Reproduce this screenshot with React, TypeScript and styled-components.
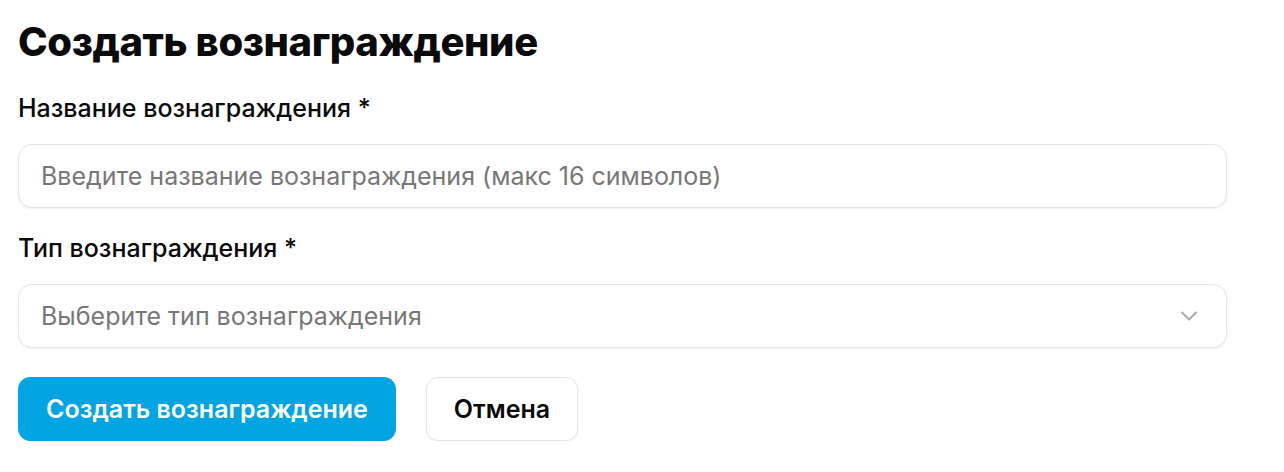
import React from "react";
import styled, { createGlobalStyle } from "styled-components";
import { ChevronDown } from "lucide-react";

const GlobalStyle = createGlobalStyle`
  body {
    margin: 0;
    background: #ffffff;
    font-family: Inter, "Noto Sans", sans-serif;
    color: #0a0a0a;
  }
`;

const Page = styled.div`
  padding: 18px 57px 0 18px;
`;

const Title = styled.h1`
  margin: 0;
  font-size: 40px;
  line-height: 48px;
  font-weight: 800;
  letter-spacing: -0.4px;
`;

const Form = styled.form`
  display: flex;
  flex-direction: column;
  gap: 26px;
  margin-top: 28px;
`;

const Field = styled.div`
  display: flex;
  flex-direction: column;
  gap: 22px;
`;

const Label = styled.label`
  font-size: 25px;
  line-height: 28px;
  font-weight: 500;
  color: #0a0a0a;
`;

const Input = styled.input`
  box-sizing: border-box;
  height: 64px;
  width: 100%;
  padding: 0 22px;
  border: 1px solid #e5e5e5;
  border-radius: 14px;
  background: #ffffff;
  box-shadow: 0 1px 3px rgba(0, 0, 0, 0.06);
  font-family: inherit;
  font-size: 25px;
  color: #0a0a0a;
  outline: none;

  &::placeholder {
    color: #777777;
  }
`;

const Select = styled.button`
  box-sizing: border-box;
  height: 64px;
  width: 100%;
  padding: 0 23px 0 22px;
  display: flex;
  align-items: center;
  justify-content: space-between;
  border: 1px solid #e5e5e5;
  border-radius: 14px;
  background: #ffffff;
  box-shadow: 0 1px 3px rgba(0, 0, 0, 0.06);
  font-family: inherit;
  font-size: 25px;
  color: #777777;
  cursor: pointer;
  text-align: left;
`;

const Actions = styled.div`
  display: flex;
  gap: 30px;
  margin-top: 3px;
`;

const Button = styled.button<{ primary?: boolean }>`
  box-sizing: border-box;
  height: 64px;
  padding: 0 27px;
  border-radius: 12px;
  font-family: inherit;
  font-size: 25px;
  font-weight: 600;
  cursor: pointer;
  border: 1px solid ${(p) => (p.primary ? "#02a4e1" : "#e5e5e5")};
  background: ${(p) => (p.primary ? "#02a4e1" : "#ffffff")};
  color: ${(p) => (p.primary ? "#ffffff" : "#0a0a0a")};
  box-shadow: ${(p) => (p.primary ? "none" : "0 1px 3px rgba(0, 0, 0, 0.06)")};
`;

const App = () => {
  return (
    <>
      <GlobalStyle />
      <Page>
        <Title>Создать вознаграждение</Title>
        <Form onSubmit={(e) => e.preventDefault()}>
          <Field>
            <Label htmlFor="reward-name">Название вознаграждения *</Label>
            <Input
              id="reward-name"
              maxLength={16}
              placeholder="Введите название вознаграждения (макс 16 символов)"
            />
          </Field>
          <Field>
            <Label>Тип вознаграждения *</Label>
            <Select type="button">
              <span>Выберите тип вознаграждения</span>
              <ChevronDown size={28} color="#ababab" strokeWidth={1.8} />
            </Select>
          </Field>
          <Actions>
            <Button primary type="submit">
              Создать вознаграждение
            </Button>
            <Button type="button">Отмена</Button>
          </Actions>
        </Form>
      </Page>
    </>
  );
};

export default App;
